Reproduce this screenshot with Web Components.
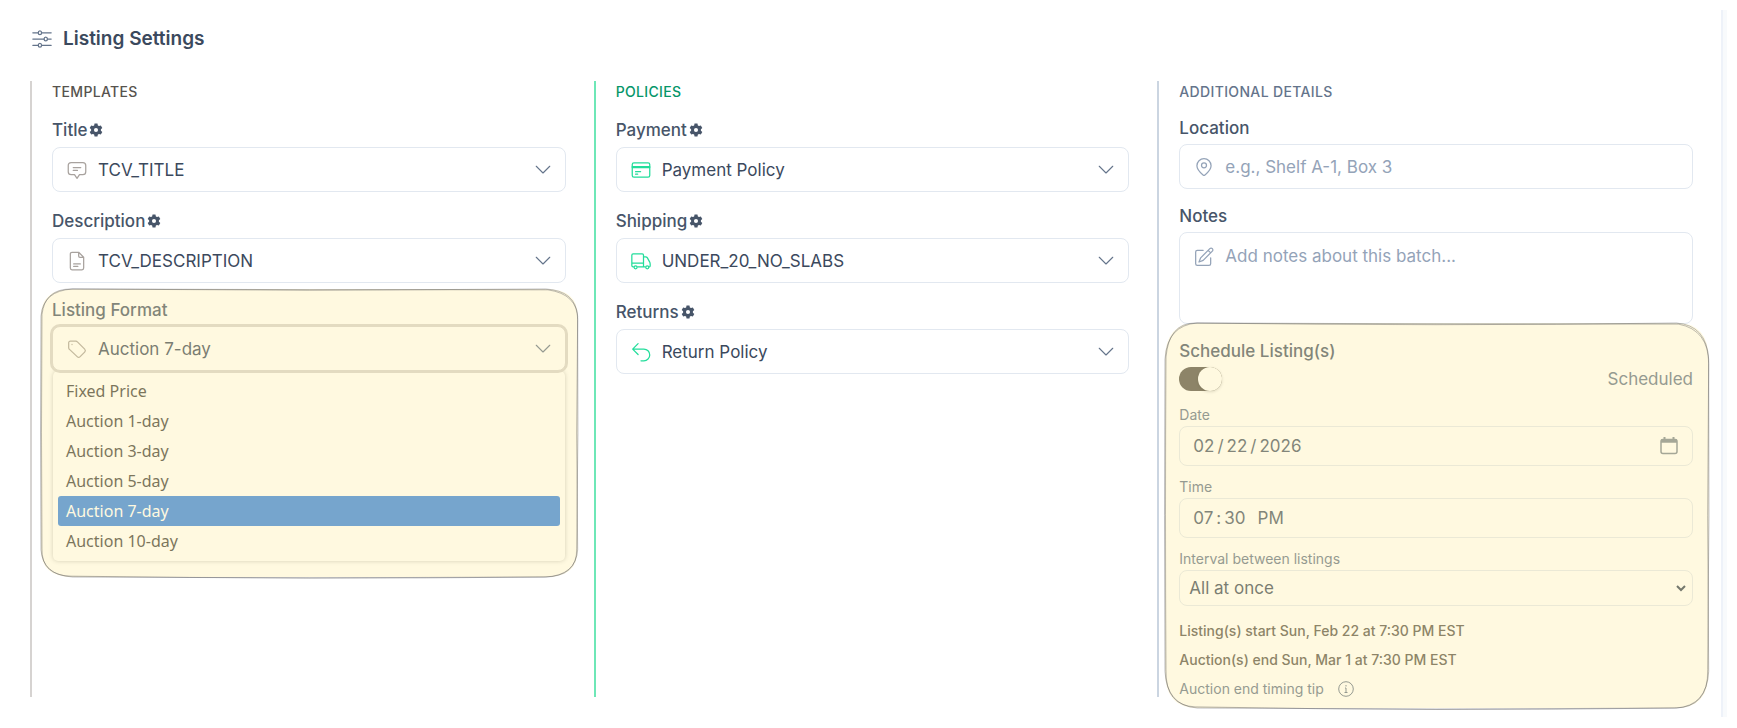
<!DOCTYPE html>
<html lang="en">
<head>
<meta charset="utf-8">
<title>Listing Settings</title>
<style>
    body {
        margin: 0;
        padding: 10px;
        background: #fff;
        color: #3b495d;
        font-family: Inter, "Liberation Sans", sans-serif;
        font-size: 17px;
        line-height: 24px;
    }
</style>
</head>
<body>
<settings-panel heading="Listing Settings">
    <settings-column heading="Templates" style="--accent: #d6d3d1; --title: #57534e; --icon: #a8a29e">
        <select-field label="Title" icon="message" gear options="TCV_TITLE"></select-field>
        <select-field label="Description" icon="document" gear options="TCV_DESCRIPTION"></select-field>
        <sketch-highlight style="--top: -9px; --right: -12px; --bottom: -16px; --left: -11px">
            <select-field label="Listing Format" icon="tag" open selected="Auction 7-day"
                options="Fixed Price|Auction 1-day|Auction 3-day|Auction 5-day|Auction 7-day|Auction 10-day"></select-field>
        </sketch-highlight>
    </settings-column>
    <settings-column heading="Policies" style="--accent: #6ee7b7; --title: #059669; --icon: #22dd9b">
        <select-field label="Payment" icon="card" gear options="Payment Policy"></select-field>
        <select-field label="Shipping" icon="truck" gear options="UNDER_20_NO_SLABS"></select-field>
        <select-field label="Returns" icon="undo" gear options="Return Policy"></select-field>
    </settings-column>
    <settings-column heading="Additional Details" style="--accent: #cbd5e1; --title: #64748b; --icon: #94a3b8">
        <text-field label="Location" icon="pin" placeholder="e.g., Shelf A-1, Box 3"></text-field>
        <text-field label="Notes" icon="edit" multiline placeholder="Add notes about this batch..."></text-field>
        <sketch-highlight style="--top: -16px; --right: -16px; --bottom: -11px; --left: -14px">
            <schedule-form></schedule-form>
        </sketch-highlight>
    </settings-column>
</settings-panel>

<script>
// Stroke icons share a 24 unit grid
const ICONS = {
    sliders: '<path d="M1 4.500h6.500M11.500 4.500H23M1 12h13.500M18.500 12H23M1 19.500h6.500M11.500 19.500H23"/><ellipse cx="9.500" cy="4.500" rx="2" ry="2.300"/><ellipse cx="16.500" cy="12" rx="2" ry="2.300"/><ellipse cx="9.500" cy="19.500" rx="2" ry="2.300"/>',
    message: '<path d="M5 3h14a3.500 3.500 0 0 1 3.500 3.500V14a3.500 3.500 0 0 1-3.500 3.500h-4L12 22l-3-4.500H5A3.500 3.500 0 0 1 1.500 14V6.500A3.500 3.500 0 0 1 5 3zM7.500 9h9M7.500 12.500h5"/>',
    document: '<path d="M14 1.500H6a2 2 0 0 0-2 2v17a2 2 0 0 0 2 2h12a2 2 0 0 0 2-2V7.500zM14 1.500V6a1.500 1.500 0 0 0 1.500 1.500H20M8 15.500h8M8 18.500h5"/>',
    tag: '<path d="M2 4.500a2 2 0 0 1 2-2h6.500a3 3 0 0 1 2 1l8.700 8.700a2.600 2.600 0 0 1 0 3.600l-5.400 5.400a2.600 2.600 0 0 1-3.600 0L3 12.500a3 3 0 0 1-1-2z"/><path d="M6 6.500v.1"/>',
    card: '<rect x="1.500" y="3.500" width="21" height="17" rx="2"/><path d="M1.500 8h21M1.500 9h21M5.500 14h6M5.500 17h2.500"/>',
    truck: '<path d="M3 19H2.500A1.500 1.500 0 0 1 1 17.500V5a1.500 1.500 0 0 1 1.500-1.500h11A1.500 1.500 0 0 1 15 5v14H8M1 14.500h14M15 7h2.500a2.500 2.500 0 0 1 2.200 1.300L22.300 13c.4.800.7 1.600.7 2.500V18a1 1 0 0 1-1 1M17 19h-2"/><circle cx="5.500" cy="19.500" r="1.800"/><circle cx="19.500" cy="19.500" r="1.800"/>',
    undo: '<path d="M8.500 2 2 8.500 8.500 15M2 8.500h13.500a7 7 0 0 1 0 14H12"/>',
    pin: '<path d="M20.500 10.500c0 5-5.500 9.500-7.500 11.200a1.500 1.500 0 0 1-2 0C9 20 3.500 15.500 3.500 10.500a8.500 8.500 0 0 1 17 0z"/><circle cx="12" cy="10" r="3"/>',
    edit: '<path d="M11 4H4a2 2 0 0 0-2 2v14a2 2 0 0 0 2 2h14a2 2 0 0 0 2-2v-7"/><path d="M19 2a2.100 2.100 0 0 1 3 3L11 16l-5 2 2-5zM17 4l3 3"/>',
    chevron: '<path d="m3 7 9 9 9-9"/>'
};

const GEAR = '<svg viewBox="0 0 24 24" fill="currentColor" fill-rule="evenodd" aria-hidden="true"><path d="M9.500 1h5l.7 3.200 2 1.100 3.100-1 2.500 4.400-2.400 2.200v2.200l2.400 2.200-2.500 4.400-3.100-1-2 1.100-.7 3.200h-5l-.7-3.200-2-1.100-3.100 1-2.500-4.400 2.400-2.200v-2.200L1.200 8.700l2.500-4.400 3.100 1 2-1.100zM12 8.500a3.500 3.500 0 1 0 0 7 3.500 3.500 0 0 0 0-7z"/></svg>';

function icon(name, className = '') {
    return `<svg class="${className}" viewBox="0 0 24 24" fill="none" stroke="currentColor" stroke-width="1.500" stroke-linecap="round" stroke-linejoin="round" aria-hidden="true">${ICONS[name]}</svg>`;
}

// Styles that every kind of field uses
const FIELD_STYLES = `
    * { box-sizing: border-box; }
    .label { display: flex; align-items: center; gap: 2px; margin-bottom: 4px; color: #475569; font-weight: 500; }
    .label.tall { height: 27px; }
    .box { display: grid; grid-template-columns: 20px 1fr 18px; align-items: center; }
    .box > svg { grid-row: 1; pointer-events: none; }
    .box > .lead { grid-column: 1; width: 20px; height: 20px; margin-left: 15px; color: var(--icon); }
    .box > .trail { grid-column: 3; width: 18px; height: 18px; margin-left: -14px; color: #64748b; }
    input, select, textarea {
        grid-row: 1; grid-column: 1 / -1;
        display: block; width: 100%; margin: 0;
        border: 1px solid #e2e8f0; border-radius: 8px;
        background: #fff; color: inherit; font: inherit;
    }
    input::placeholder, textarea::placeholder { color: #94a3b8; opacity: 1; }
`;

class SettingsPanel extends HTMLElement {
    constructor() {
        super();
        this.attachShadow({ mode: 'open' });
    }

    connectedCallback() {
        this.shadowRoot.innerHTML = `
            <style>
                :host { display: block; padding-right: 4px; background: #f8fafc; }
                section { padding: 15px 28px 20px 20px; background: #fff; border-right: 2px solid #eef2f9; }
                header { display: flex; align-items: center; gap: 11px; margin-bottom: 28px; }
                header svg { width: 20px; height: 20px; margin-left: 2px; color: #64748b; }
                h1 { margin: 0; font-size: 19px; line-height: 28px; font-weight: 600; }
                .columns { display: grid; grid-template-columns: repeat(3, minmax(0, 1fr)); gap: 28px; }
            </style>
            <section>
                <header>${icon('sliders')}<h1>${this.getAttribute('heading')}</h1></header>
                <div class="columns"><slot></slot></div>
            </section>
        `;
    }
}

class SettingsColumn extends HTMLElement {
    constructor() {
        super();
        this.attachShadow({ mode: 'open' });
    }

    connectedCallback() {
        this.shadowRoot.innerHTML = `
            <style>
                :host { display: flex; flex-direction: column; gap: 15px; padding-left: 20px; border-left: 2px solid var(--accent); }
                h2 { margin: 0 0 -2px; color: var(--title); font-size: 14px; line-height: 22px; font-weight: 500; letter-spacing: 0.025em; text-transform: uppercase; }
            </style>
            <h2>${this.getAttribute('heading')}</h2>
            <slot></slot>
        `;
    }
}

class SelectField extends HTMLElement {
    constructor() {
        super();
        this.attachShadow({ mode: 'open' });
    }

    connectedCallback() {
        const label = this.getAttribute('label');
        const options = this.getAttribute('options').split('|');
        const selected = this.getAttribute('selected') || options[0];
        const gear = this.hasAttribute('gear')
            ? `<button type="button" aria-label="${label} settings">${GEAR}</button>` : '';
        const menu = this.hasAttribute('open')
            ? `<ul role="listbox" aria-label="${label}">${options.map(o => `<li role="option" aria-selected="${o === selected}">${o}</li>`).join('')}</ul>` : '';

        this.shadowRoot.innerHTML = `
            <style>
                ${FIELD_STYLES}
                :host { display: block; }
                button { display: flex; padding: 0; border: 0; background: none; color: #475569; }
                button svg { width: 14px; height: 14px; }
                select { height: 45px; padding: 0 45px; appearance: none; }
                :host([open]) select { border-color: #d6d3d1; box-shadow: 0 0 0 2px #d6d3d1; outline: 0; }
                ul {
                    margin: 0 1px; padding: 5px; list-style: none;
                    border-radius: 5px; box-shadow: 0 0 4px rgba(0, 0, 0, 0.25);
                    color: #3d3d3d; font-family: "Noto Sans", sans-serif; font-size: 16px;
                }
                li { padding: 0 8px; border-radius: 3px; line-height: 30px; }
                li[aria-selected="true"] { background: #3584e4; color: #fff; }
            </style>
            <div class="label ${gear ? 'tall' : ''}"><label for="field">${label}</label>${gear}</div>
            <div class="box">
                <select id="field">${options.map(o => `<option ${o === selected ? 'selected' : ''}>${o}</option>`).join('')}</select>
                ${icon(this.getAttribute('icon'), 'lead')}
                ${icon('chevron', 'trail')}
            </div>
            ${menu}
        `;
    }
}

class TextField extends HTMLElement {
    constructor() {
        super();
        this.attachShadow({ mode: 'open' });
    }

    connectedCallback() {
        const placeholder = this.getAttribute('placeholder');
        const control = this.hasAttribute('multiline')
            ? `<textarea id="field" placeholder="${placeholder}"></textarea>`
            : `<input id="field" type="text" placeholder="${placeholder}">`;

        this.shadowRoot.innerHTML = `
            <style>
                ${FIELD_STYLES}
                :host { display: block; }
                input { height: 45px; padding: 0 45px; }
                textarea { height: 92px; padding: 11px 45px; resize: none; }
                :host([multiline]) .box { align-items: start; }
                :host([multiline]) .lead { margin-top: 15px; }
            </style>
            <div class="label"><label for="field">${this.getAttribute('label')}</label></div>
            <div class="box">${control}${icon(this.getAttribute('icon'), 'lead')}</div>
        `;
    }
}

class ScheduleForm extends HTMLElement {
    constructor() {
        super();
        this.attachShadow({ mode: 'open' });
        this.shadowRoot.innerHTML = `
            <style>
                ${FIELD_STYLES}
                :host { display: block; }
                .toggle { display: flex; justify-content: space-between; align-items: center; margin-bottom: 14px; color: #64748b; }
                .toggle input {
                    appearance: none; display: flex; justify-content: flex-end;
                    width: 43px; height: 24px; border: 0; border-radius: 12px; background: #57534e;
                }
                .toggle input::before { content: ""; width: 24px; height: 24px; border-radius: 50%; background: #fff; box-shadow: 0 1px 3px rgba(0, 0, 0, 0.2); }
                .small { display: block; margin-bottom: 1px; color: #64748b; font-size: 14px; line-height: 20px; }
                .box { margin-bottom: 11px; }
                .box input { height: 40px; padding: 0 12px; color: #475569; }
                ::-webkit-calendar-picker-indicator { opacity: 0; }
                ::-webkit-datetime-edit-text { padding: 0 2px; }
                ::-webkit-datetime-edit-ampm-field { margin-left: 3px; }
                .box select { height: 36px; padding: 0 9px; appearance: none; }
                .box > .calendar { grid-column: 3; width: 18px; height: 20px; margin-left: -15px; color: #7b8794; }
                .box > .arrow { grid-column: 3; width: 12px; height: 12px; color: #334155; }
                p { margin: 0 0 13px; font-size: 14px; line-height: 16px; font-weight: 500; color: #57534e; }
                .summary { margin-top: 17px; }
                .tip { display: flex; align-items: center; gap: 14px; margin: 0; color: #64748b; font-weight: 400; }
                .tip button { display: flex; padding: 0; border: 0; background: none; color: inherit; }
                .tip svg { width: 16px; height: 16px; }
            </style>
            <div class="label"><label for="scheduled">Schedule Listing(s)</label></div>
            <div class="toggle"><input id="scheduled" type="checkbox" role="switch" checked><span>Scheduled</span></div>
            <label class="small" for="date">Date</label>
            <div class="box">
                <input id="date" type="date" value="2026-02-22">
                <svg class="calendar" viewBox="0 0 18 20" fill="none" stroke="currentColor" stroke-width="1.500" aria-hidden="true"><rect x="1" y="3.500" width="16" height="14" rx="2"/><path d="M1 5h16" stroke-width="3.500"/><path d="M4.500 1v3M13.500 1v3" stroke-width="2"/></svg>
            </div>
            <label class="small" for="time">Time</label>
            <div class="box"><input id="time" type="time" value="19:30"></div>
            <label class="small" for="interval">Interval between listings</label>
            <div class="box">
                <select id="interval"><option>All at once</option></select>
                <svg class="arrow" viewBox="0 0 12 12" fill="none" stroke="currentColor" stroke-width="2" aria-hidden="true"><path d="m2 4 4 4 4-4"/></svg>
            </div>
            <p class="summary">Listing(s) start Sun, Feb 22 at 7:30 PM EST</p>
            <p>Auction(s) end Sun, Mar 1 at 7:30 PM EST</p>
            <p class="tip">Auction end timing tip
                <button type="button" aria-label="About auction end timing"><svg viewBox="0 0 16 16" fill="none" stroke="currentColor" aria-hidden="true"><circle cx="8" cy="8" r="7.300"/><path d="M7 7h1v4M6.500 11.500h3M8 4v1.500"/></svg></button>
            </p>
        `;
    }
}

// Translucent marker with a loose pencil outline, laid over the slotted content
class SketchHighlight extends HTMLElement {
    constructor() {
        super();
        this.attachShadow({ mode: 'open' });
        this.shadowRoot.innerHTML = `
            <style>
                :host { display: block; position: relative; }
                .marker {
                    position: absolute; pointer-events: none;
                    top: var(--top); right: var(--right); bottom: var(--bottom); left: var(--left);
                }
                svg { display: block; width: 100%; height: 100%; overflow: visible; }
                path { vector-effect: non-scaling-stroke; }
            </style>
            <slot></slot>
            <div class="marker">
                <svg viewBox="0 0 540 340" preserveAspectRatio="none" fill="none" stroke="#44444a" stroke-opacity="0.350" aria-hidden="true">
                    <path fill="#ffec9f" fill-opacity="0.320" stroke="none" d="M32 0H508Q540 0 540 32V308Q540 340 508 340H32Q0 340 0 308V32Q0 0 32 0z"/>
                    <path d="M32 0Q270 3 508 0Q538 2 540 32Q538 170 540 308Q538 338 508 340Q270 342 32 340Q2 338 0 308Q-1 170 0 32Q2 2 32 0z"/>
                    <path d="M30 0Q270 1 510 1Q540 6 540 36Q541 170 539 306Q540 340 506 340Q270 343 30 339Q0 338 1 306Q0 170 1 30Q4 0 30 0z"/>
                </svg>
            </div>
        `;
    }
}

customElements.define('settings-panel', SettingsPanel);
customElements.define('settings-column', SettingsColumn);
customElements.define('select-field', SelectField);
customElements.define('text-field', TextField);
customElements.define('schedule-form', ScheduleForm);
customElements.define('sketch-highlight', SketchHighlight);
</script>
</body>
</html>
